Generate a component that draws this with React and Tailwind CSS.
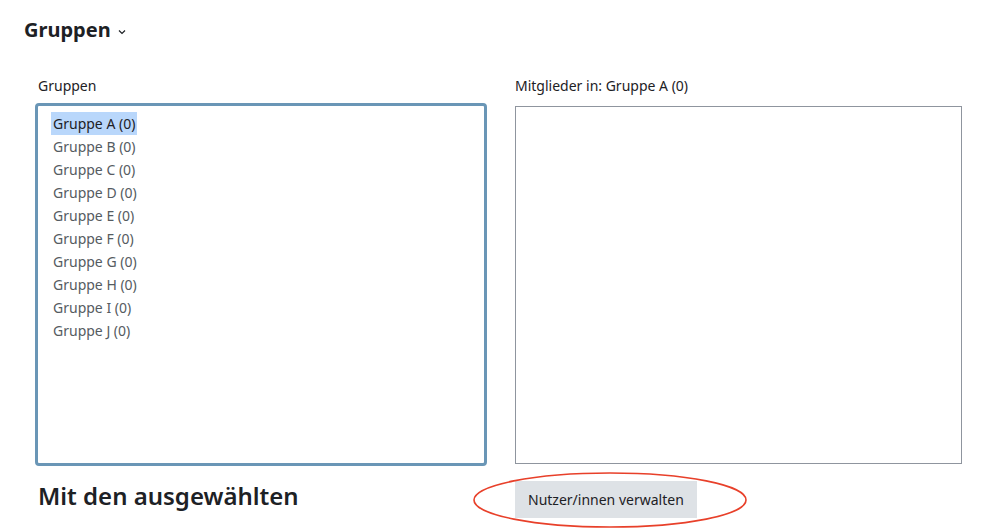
import React from 'react'

const groups = ['A', 'B', 'C', 'D', 'E', 'F', 'G', 'H', 'I', 'J']

export default function App() {
  return (
    <div
      className="relative w-[988px] h-[530px] overflow-hidden bg-white text-[#1d2125]"
      style={{ fontFamily: '"Noto Sans", "Open Sans", sans-serif' }}
    >
      {/* Section header */}
      <div className="flex items-center gap-2 pl-[24px] pt-[14px] h-[46px]">
        <h3 className="text-[20px] font-bold leading-none">Gruppen</h3>
        <svg width="10" height="10" viewBox="0 0 10 10" className="mt-[3px] -ml-[2px]">
          <path d="M2 3.5 L5 6.5 L8 3.5" fill="none" stroke="#1d2125" strokeWidth="1.2" />
        </svg>
      </div>

      <div className="grid grid-cols-[452px_447px] gap-x-[28px] pl-[35px] pt-[30px]">
        {/* Groups */}
        <div className="flex flex-col">
          <label className="pl-[3px] text-[14px] leading-[20px] mb-[7px]">Gruppen</label>
          <div className="h-[363px] rounded-[4px] border-[3px] border-[#6a96b6] pl-[15px] pt-[6px]">
            <ul className="text-[14px] leading-[23px] text-[#555b61]">
              {groups.map((g, i) => (
                <li key={g}>
                  <span
                    className={
                      i === 0
                        ? 'inline-block bg-[#b9d7fb] text-[#1d2125] px-[2px] -mx-[2px]'
                        : 'inline-block'
                    }
                  >
                    Gruppe {g} (0)
                  </span>
                </li>
              ))}
            </ul>
          </div>
        </div>

        {/* Members */}
        <div className="flex flex-col">
          <label className="text-[14px] leading-[20px] mb-[10px]">Mitglieder in: Gruppe A (0)</label>
          <div className="h-[358px] border border-[#8f959e]" />
        </div>

        <div className="pl-[3px] pt-[14px]">
          <h4 className="text-[24px] font-semibold leading-[32px]">Mit den ausgewählten</h4>
        </div>
        <div className="pt-[15px]">
          <button className="h-[37px] px-[13px] bg-[#dee2e6] text-[14px] text-[#1d2125]">
            Nutzer/innen verwalten
          </button>
        </div>
      </div>

      {/* Red annotation ellipse */}
      <svg
        className="absolute left-[472px] top-[471px] pointer-events-none"
        width="276"
        height="58"
        viewBox="0 0 276 58"
      >
        <ellipse cx="138" cy="29" rx="136" ry="27" fill="none" stroke="#e8402a" strokeWidth="1.6" />
      </svg>
    </div>
  )
}
